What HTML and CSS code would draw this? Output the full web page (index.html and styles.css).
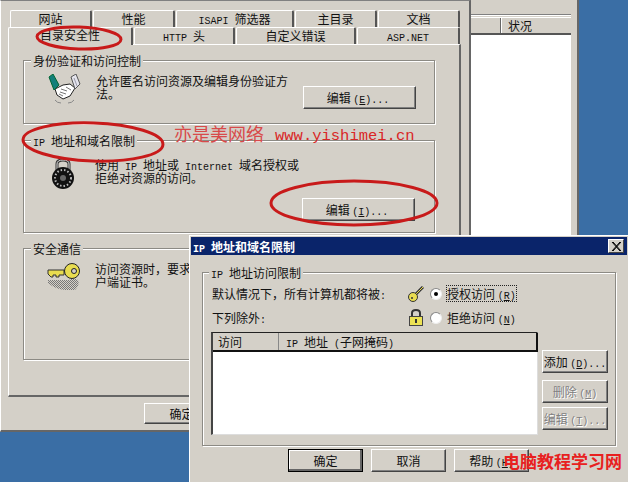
FILE: index.html
```html
<!DOCTYPE html>
<html lang="en">

<head>
    <meta charset="UTF-8">
    <title>IP 地址和域名限制</title>
    <link rel="stylesheet" href="styles.css">
</head>

<body>
    <!-- list window behind the property sheet -->
    <div class="list-win">
        <div class="list-strip"></div>
        <div class="list-head">
            <div class="list-col-a"></div>
            <div class="list-col-b">状况</div>
        </div>
        <div class="list-white"></div>
    </div>

    <!-- property sheet -->
    <div class="props">
        <div class="tab-row row-top">
            <div class="tab w82">网站</div>
            <div class="tab w82">性能</div>
            <div class="tab w118"><span class="en">ISAPI </span>筛选器</div>
            <div class="tab w82">主目录</div>
            <div class="tab w82">文档</div>
        </div>
        <div class="tab-row">
            <div class="tab selected w125">目录安全性</div>
            <div class="tab w101"><span class="en">HTTP </span>头</div>
            <div class="tab w120">自定义错误</div>
            <div class="tab w104"><span class="en">ASP.NET</span></div>
        </div>
        <div class="tab-page">
            <fieldset class="group group-auth">
                <legend>身份验证和访问控制</legend>
                <div class="group-body">
                    <svg class="icon-cell" width="36" height="31" viewBox="0 0 36 31">
                        <path d="M9 15L17 11L24 10L29 14L24 22L17 25L11 21Z" fill="#fff" stroke="#222"/>
                        <path d="M15 15L21 17M14 18L20 20M13 20L17 22M20 13L25 16" fill="none" stroke="#777"/>
                        <path d="M3 3L7 0L13 11L8 16Z" fill="#127f7a" stroke="#063"/>
                        <path d="M25 3L30 0L34 10L29 15Z" fill="#e4e4ec" stroke="#555"/>
                        <path d="M28 4L31 12" fill="none" stroke="#99a"/>
                        <path d="M9 26Q11 29 15 29M22 29Q26 29 28 26" fill="none" stroke="#888"/>
                    </svg>
                    <div class="group-text">允许匿名访问资源及编辑身份验证方<br>法。</div>
                    <button class="btn edit-btn edit-auth">编辑 <span class="en">(<u>E</u>)...</span></button>
                </div>
            </fieldset>
            <fieldset class="group group-ip">
                <legend><span class="en">IP </span>地址和域名限制</legend>
                <div class="group-body">
                    <svg class="icon-cell lock-cell" width="24" height="31" viewBox="0 0 24 31">
                        <path d="M6 12V5Q6 1 12 1Q18 1 18 5V12" fill="none" stroke="#333" stroke-width="3"/>
                        <path d="M6 12V5Q6 1 12 1Q18 1 18 5V12" fill="none" stroke="#ddd"/>
                        <circle cx="12" cy="19" r="11" fill="#111"/>
                        <circle cx="12" cy="19" r="8" fill="none" stroke="#bbb" stroke-width="2" stroke-dasharray="1.5 2"/>
                        <circle cx="12" cy="19" r="3" fill="#666"/>
                    </svg>
                    <div class="group-text text-ip">使用<span class="en"> IP </span>地址或<span class="en"> Internet </span>域名授权或<br>拒绝对资源的访问。</div>
                    <button class="btn edit-btn edit-ip">编辑 <span class="en">(<u>I</u>)...</span></button>
                </div>
            </fieldset>
            <fieldset class="group group-sec">
                <legend>安全通信</legend>
                <div class="group-body">
                    <svg class="icon-cell key-cell" width="33" height="28" viewBox="0 0 33 28">
                        <defs>
                            <pattern id="hatch" width="2" height="2" patternUnits="userSpaceOnUse">
                                <rect width="1" height="1" fill="#777"/>
                                <rect x="1" y="1" width="1" height="1" fill="#777"/>
                            </pattern>
                        </defs>
                        <path d="M1 17H22Q26 14 31 17Q33 22 28 27H18Q8 26 1 20Z" fill="url(#hatch)"/>
                        <path d="M1 7H17V12H12V14H9V12H6V14H4L1 11Z" fill="#e8dc50" stroke="#333"/>
                        <circle cx="25" cy="8" r="7.5" fill="#e8dc50" stroke="#222"/>
                        <circle cx="27" cy="8" r="2.5" fill="#d4d0c8" stroke="#222"/>
                    </svg>
                    <div class="group-text">访问资源时，要求使用安全通信并要求客<br>户端证书。</div>
                </div>
            </fieldset>
        </div>
        <div class="props-buttons">
            <button class="btn props-btn">确定</button>
        </div>
    </div>

    <!-- red notes drawn over the screenshot -->
    <div class="note">亦是美网络<span class="note-url">www.yishimei.cn</span></div>
    <svg class="marks" width="628" height="482" viewBox="0 0 628 482">
        <ellipse cx="79" cy="38" rx="42" ry="11" transform="rotate(2 79 38)"/>
        <ellipse cx="93" cy="142" rx="70" ry="19" transform="rotate(2 93 142)"/>
        <ellipse cx="354" cy="203" rx="83" ry="22"/>
    </svg>

    <!-- dialog on top -->
    <div class="dialog">
        <div class="title-bar">
            <span class="title-text"><span class="en-title">IP </span>地址和域名限制</span>
            <span class="close-btn">
                <svg width="10" height="9" viewBox="0 0 10 9">
                    <path d="M1 0L9 9M2 0L10 9M9 0L1 9M10 0L2 9" stroke="#000" fill="none"/>
                </svg>
            </span>
        </div>
        <fieldset class="group dlg-group">
            <legend><span class="en">IP </span>地址访问限制</legend>
            <div class="choice-row">
                <div class="choice-label">默认情况下，所有计算机都将被<span class="en">:</span></div>
                <svg class="choice-icon" width="16" height="16" viewBox="0 0 16 16">
                    <path d="M7 9L15 1" stroke="#333" stroke-width="3"/>
                    <path d="M7 9L15 1" stroke="#e8dc50"/>
                    <circle cx="5" cy="11" r="4.500" fill="#e8dc50" stroke="#333"/>
                    <circle cx="4" cy="12" r="1" fill="#333"/>
                </svg>
                <span class="radio checked"></span>
                <span class="radio-label focused">授权访问 <span class="en">(<u>R</u>)</span></span>
            </div>
            <div class="choice-row row-two">
                <div class="choice-label">下列除外<span class="en">:</span></div>
                <svg class="choice-icon" width="16" height="17" viewBox="0 0 16 17">
                    <path d="M4 8V4Q4 1 8 1Q12 1 12 4V8" fill="none" stroke="#333" stroke-width="2"/>
                    <rect x="1.500" y="7.500" width="13" height="9" fill="#ece254" stroke="#444"/>
                    <rect x="7" y="10" width="2" height="4" fill="#333"/>
                </svg>
                <span class="radio"></span>
                <span class="radio-label">拒绝访问 <span class="en">(<u>N</u>)</span></span>
            </div>
            <div class="list-area">
                <div class="ip-list">
                    <div class="ip-head">
                        <div class="ip-col-a">访问</div>
                        <div class="ip-col-b"><span class="en">IP </span>地址<span class="en"> (</span>子网掩码<span class="en">)</span></div>
                    </div>
                </div>
                <div class="side-buttons">
                    <button class="btn side-btn">添加 <span class="en">(<u>D</u>)...</span></button>
                    <button class="btn side-btn disabled">删除 <span class="en">(<u>M</u>)</span></button>
                    <button class="btn side-btn disabled last">编辑 <span class="en">(<u>T</u>)...</span></button>
                </div>
            </div>
        </fieldset>
        <div class="dlg-buttons">
            <button class="btn dlg-btn default">确定</button>
            <button class="btn dlg-btn">取消</button>
            <button class="btn dlg-btn">帮助 <span class="en">(<u>H</u>)</span></button>
        </div>
    </div>

    <div class="stamp">电脑教程学习网</div>
</body>

</html>
```

FILE: styles.css
```css
/* Global Reset */
* {
    box-sizing: border-box;
    margin: 0;
    padding: 0;
}

body {
    position: relative;
    width: 628px;
    height: 482px;
    overflow: hidden;
    background-color: #3a6ea5;
    font-family: "Noto Sans CJK SC", sans-serif;
    font-size: 12px;
    line-height: 13px;
    color: #111;
}

/* half width latin, like the old bitmap font */
.en {
    font-family: "Liberation Mono", monospace;
    font-size: 10px;
    line-height: 0;
    white-space: pre;
}

.en-title {
    font-family: "Liberation Mono", monospace;
    font-size: 10px;
    font-weight: bold;
    line-height: 0;
    white-space: pre;
}

/* list window */
.list-win {
    position: absolute;
    left: 468px;
    top: 0;
    width: 111px;
    height: 432px;
    padding: 0 6px 0 3px;
    background-color: #d4d0c8;
    border-right: 2px solid #666;
}

.list-strip {
    height: 15px;
    border-bottom: 1px solid #808080;
    box-shadow: 0 1px 0 #fff;
}

.list-head {
    display: flex;
    height: 18px;
    margin-top: 2px;
    border-top: 1px solid #fff;
    border-bottom: 2px solid #555;
}

.list-col-a {
    width: 30px;
    border-right: 1px solid #666;
}

.list-col-b {
    padding: 1px 0 0 6px;
    border-left: 1px solid #fff;
}

.list-white {
    height: 400px;
    background-color: #fff;
}

/* property sheet */
.props {
    position: absolute;
    left: 0;
    top: 0;
    width: 471px;
    height: 432px;
    padding: 9px 7px 0 7px;
    background-color: #d4d0c8;
    border-top: 1px solid #808080;
    border-left: 1px solid #fff;
    border-right: 2px solid #666;
    border-bottom: 2px solid #666;
}

.tab-row {
    display: flex;
    gap: 1px;
}

.row-top {
    margin-left: 2px;
}

.tab {
    position: relative;
    height: 17px;
    padding-top: 1px;
    text-align: center;
    background-color: #d4d0c8;
    border-top: 1px solid #fff;
    border-left: 1px solid #fff;
    border-right: 2px solid #555;
    border-top-left-radius: 2px;
    border-top-right-radius: 2px;
}

.tab.selected {
    height: 18px;
    margin-bottom: -1px;
    padding-top: 0;
    z-index: 1;
    border-right: 2px solid #555;
}

.w82 { width: 82px; }
.w118 { width: 118px; }
.w125 { width: 125px; }
.w101 { width: 101px; }
.w120 { width: 120px; }
.w104 { width: 103px; }

.tab-page {
    width: 453px;
    height: 353px;
    padding: 9px 0 0 14px;
    border-top: 1px solid #fff;
    border-left: 1px solid #fff;
    border-right: 2px solid #666;
    border-bottom: 2px solid #666;
}

/* group boxes */
.group {
    border: 1px solid #8c8a84;
    box-shadow: 1px 1px 0 #fff, inset 1px 1px 0 #fff;
    min-width: 0;
}

.group legend {
    margin-left: 7px;
    padding: 0 2px;
    line-height: 13px;
    background-color: #d4d0c8;
}

.group-auth,
.group-ip,
.group-sec {
    width: 412px;
}

.group-auth {
    height: 70px;
}

.group-ip {
    height: 99px;
    margin-top: 10px;
}

.group-sec {
    height: 118px;
    margin-top: 9px;
}

.group-body {
    position: relative;
    display: flex;
    align-items: flex-start;
    padding-top: 7px;
}

.icon-cell {
    flex: none;
    margin: 0 14px 0 22px;
}

.lock-cell {
    margin: 5px 20px 0 27px;
}

.key-cell {
    margin: 1px 15px 0 23px;
}

.group-text {
    flex: none;
    width: 232px;
    white-space: nowrap;
}

.text-ip {
    padding-top: 4px;
}

/* buttons */
.btn {
    display: block;
    font-family: inherit;
    font-size: 12px;
    line-height: 13px;
    color: #111;
    background-color: #d4d0c8;
    border-top: 1px solid #fff;
    border-left: 1px solid #fff;
    border-right: 1px solid #444;
    border-bottom: 1px solid #444;
    box-shadow: inset -1px -1px 0 #808080;
    white-space: nowrap;
}

.edit-btn {
    flex: none;
    width: 113px;
    height: 23px;
    margin-left: -25px;
    padding-right: 3px;
}

.edit-auth {
    margin-top: 12px;
}

.edit-ip {
    margin-top: 44px;
}

.props-buttons {
    padding: 6px 0 0 136px;
}

.props-btn {
    width: 75px;
    height: 21px;
}

/* notes */
.note {
    position: absolute;
    left: 174px;
    top: 123px;
    font-size: 18px;
    line-height: 20px;
    color: #d84a4a;
    white-space: nowrap;
    z-index: 2;
}

.note-url {
    margin-left: 11px;
    font-family: "Liberation Mono", monospace;
    font-size: 15.500px;
    color: #d92626;
    vertical-align: 1px;
}

.marks {
    position: absolute;
    left: 0;
    top: 0;
    z-index: 3;
}

.marks ellipse {
    fill: none;
    stroke: #c81a1a;
    stroke-width: 3;
}

/* dialog */
.dialog {
    position: absolute;
    left: 189px;
    top: 235px;
    width: 440px;
    height: 248px;
    padding: 1px;
    background-color: #d4d0c8;
    border-top: 1px solid #fff;
    border-left: 1px solid #fff;
    border-right: 1px solid #444;
    border-bottom: 1px solid #444;
    z-index: 4;
}

.title-bar {
    display: flex;
    align-items: center;
    justify-content: space-between;
    height: 18px;
    padding: 0 3px 0 2px;
    background-color: #0a246a;
}

.title-text {
    font-weight: bold;
    color: #fff;
}

.close-btn {
    display: flex;
    align-items: center;
    justify-content: center;
    width: 16px;
    height: 14px;
    background-color: #d4d0c8;
    border-top: 1px solid #fff;
    border-left: 1px solid #fff;
    border-right: 1px solid #444;
    border-bottom: 1px solid #444;
}

.dlg-group {
    width: 414px;
    height: 180px;
    margin: 11px 0 0 11px;
    padding: 0 0 0 8px;
}

.dlg-group legend {
    margin-left: -2px;
}

.choice-row {
    display: flex;
    align-items: center;
    height: 17px;
    margin-top: 6px;
}

.row-two {
    margin-top: 7px;
}

.choice-label {
    flex: none;
    width: 197px;
    padding-left: 1px;
}

.choice-icon {
    flex: none;
    margin-right: 6px;
}

.radio {
    position: relative;
    flex: none;
    width: 12px;
    height: 12px;
    margin-right: 4px;
    background-color: #fff;
    border-radius: 50%;
    border: 1px solid #888;
    border-right-color: #eee;
    border-bottom-color: #eee;
}

.radio.checked::after {
    content: "";
    position: absolute;
    left: 3px;
    top: 3px;
    width: 4px;
    height: 4px;
    background-color: #000;
    border-radius: 50%;
}

.radio-label {
    padding: 1px 0;
    border: 1px dotted transparent;
    white-space: nowrap;
}

.radio-label.focused {
    border-color: #222;
}

.list-area {
    display: flex;
    gap: 4px;
    margin-top: 6px;
}

.ip-list {
    flex: none;
    width: 327px;
    height: 103px;
    background-color: #fff;
    border-top: 1px solid #222;
    border-left: 2px solid #444;
    border-right: 1px solid #ddd;
    border-bottom: 1px solid #ddd;
}

.ip-head {
    display: flex;
    height: 19px;
    margin-right: -1px;
    background-color: #d4d0c8;
    border-bottom: 2px solid #111;
    border-right: 2px solid #111;
}

.ip-col-a {
    width: 66px;
    padding: 2px 0 0 5px;
    border-right: 1px solid #888;
}

.ip-col-b {
    padding: 2px 0 0 7px;
}

.side-buttons {
    margin-top: 18px;
}

.side-btn {
    width: 66px;
    height: 23px;
    margin-bottom: 7px;
}

.side-btn.last {
    margin-top: -3px;
}

.side-btn.disabled {
    color: #808080;
    text-shadow: 1px 1px 0 #fff;
}

.dlg-buttons {
    display: flex;
    gap: 8px;
    margin: 3px 0 0 97px;
}

.dlg-btn {
    width: 75px;
    height: 23px;
}

.dlg-btn.default {
    border: 1px solid #000;
    box-shadow: inset -2px -2px 0 #666, inset 1px 1px 0 #fff;
}

.stamp {
    position: absolute;
    left: 503px;
    top: 451px;
    font-size: 17px;
    line-height: 20px;
    font-weight: bold;
    color: #e82020;
    white-space: nowrap;
    z-index: 5;
}
```
